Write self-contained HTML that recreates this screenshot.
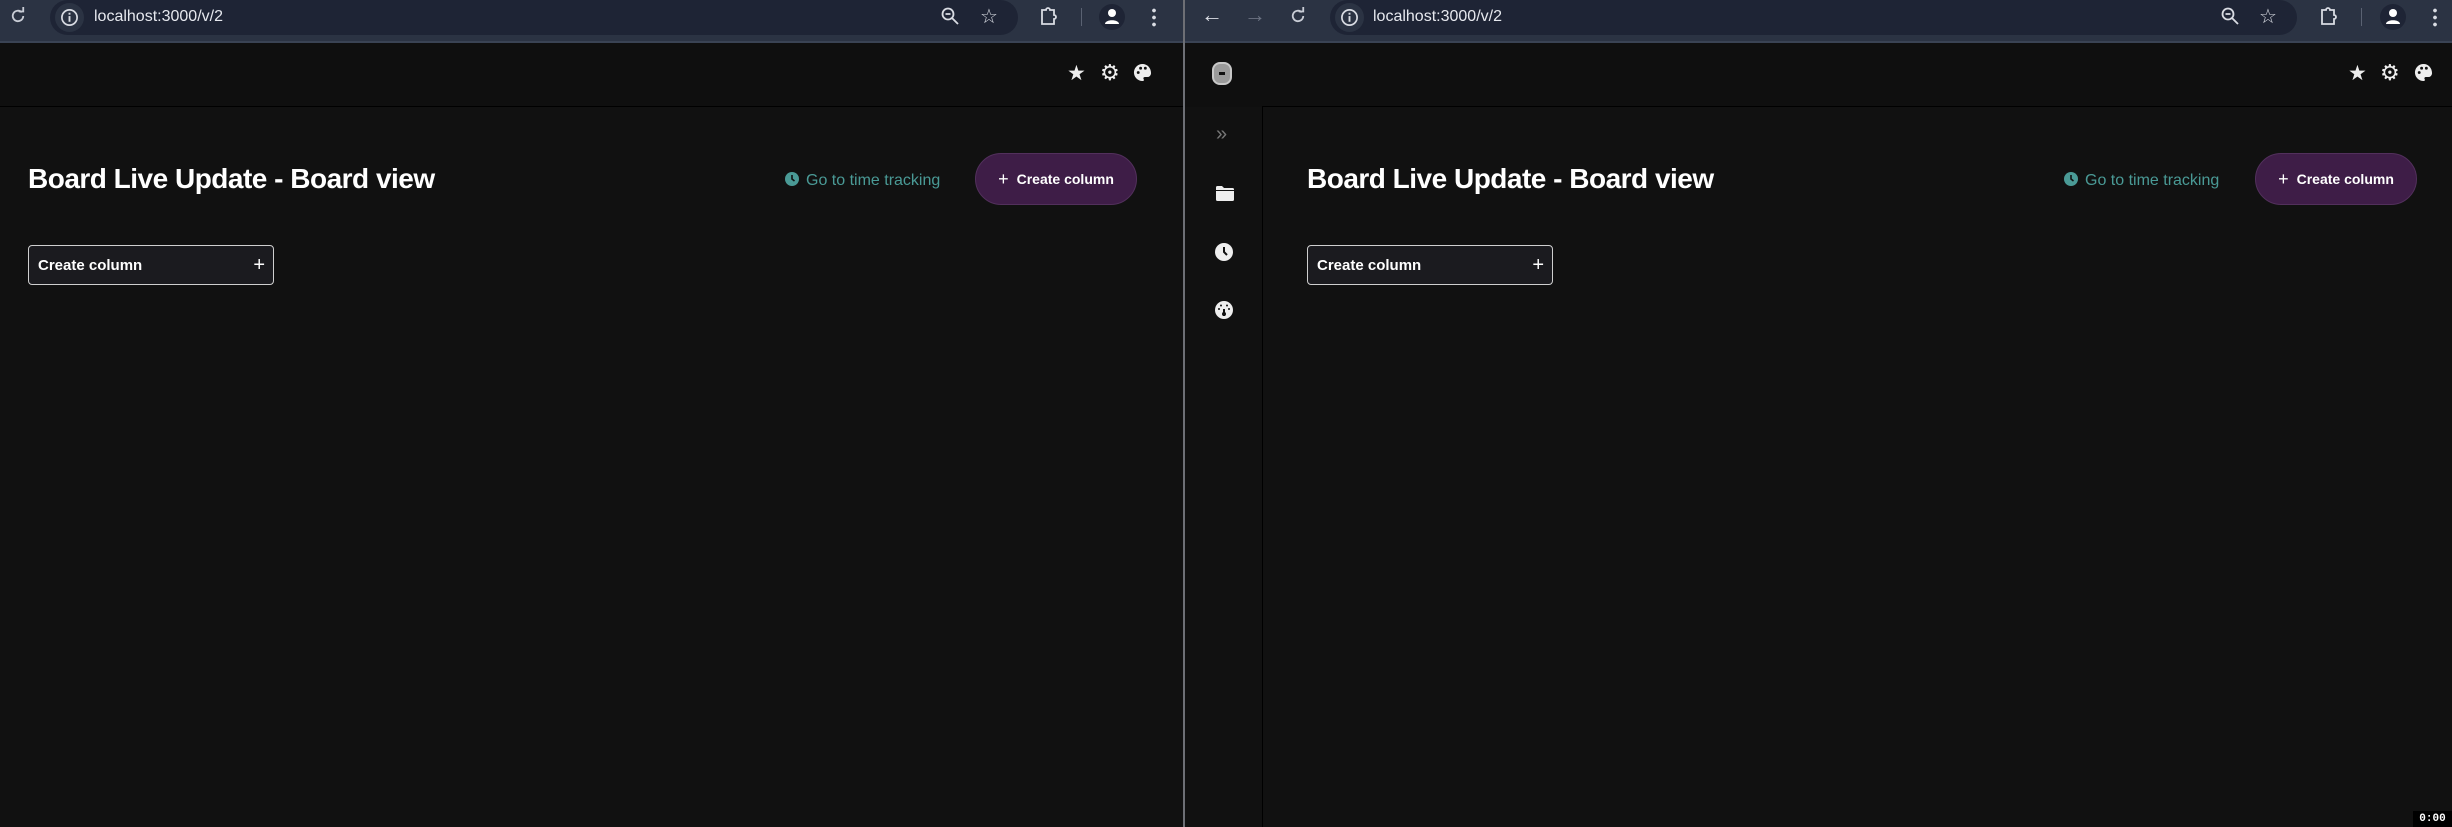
<!DOCTYPE html>
<html><head><meta charset="utf-8"><style>
*{margin:0;padding:0;box-sizing:border-box}
body{width:2452px;height:827px;background:#111;position:relative;overflow:hidden;font-family:"Liberation Sans",Arial,sans-serif;color:#fff}
.abs{position:absolute}
.bar{top:0;height:43px;background:#2b3343;border-bottom:2px solid #3a4354}
.pill{top:0;height:35px;background:#1e2435;border-radius:18px}
.url{font-size:16px;color:#e6e8ee;top:8px}
.hdr{top:43px;height:64px;background:#0f0f0f;border-bottom:1px solid #000}
.title{font-size:28px;font-weight:bold;top:163px;letter-spacing:-0.5px}
.tt{font-size:16px;color:#4a9a96;top:172px}
.cp{top:153px;width:162px;height:52px;border-radius:26px;background:#3e1d47;border:1px solid #52305c;font-size:14px;font-weight:bold;display:flex;align-items:center;justify-content:center;gap:8px}
.cb{top:245px;width:246px;height:40px;border:1px solid #cfcfcf;border-radius:4px;background:#1b1b1f;font-size:15px;font-weight:bold;display:flex;align-items:center;justify-content:space-between;padding:0 8px 0 9px}
svg{display:block}
</style></head><body>
<div class="abs bar" style="left:0;width:1183px"></div>
<svg class="abs" style="left:9px;top:7px" width="18" height="18" viewBox="0 0 24 24"><path d="M19 12a7 7 0 1 1-2-5" fill="none" stroke="#c9cdd6" stroke-width="2.4"/><path d="M13 6h6V0" fill="none" stroke="#c9cdd6" stroke-width="2.4"/></svg>
<div class="abs pill" style="left:50px;width:968px"></div>
<div class="abs" style="left:55px;top:3px;width:29px;height:29px;border-radius:50%;background:#2b3343"></div>
<svg class="abs" style="left:60px;top:8px" width="19" height="19" viewBox="0 0 20 20"><circle cx="10" cy="10" r="8" fill="none" stroke="#d9dce3" stroke-width="1.8"/><rect x="9" y="8.5" width="2" height="6" fill="#d9dce3"/><rect x="9" y="5" width="2" height="2" fill="#d9dce3"/></svg>
<div class="abs url" style="left:94px">localhost:3000/v/2</div>
<svg class="abs" style="left:940px;top:6px" width="20" height="20" viewBox="0 0 20 20"><circle cx="8" cy="8" r="5.5" fill="none" stroke="#d9dce3" stroke-width="1.8"/><path d="M12 12l6 6M5.5 8h5" stroke="#d9dce3" stroke-width="1.8"/></svg>
<div class="abs" style="left:980px;top:4px;font-size:20px;color:#d9dce3">☆</div>
<svg class="abs" style="left:1039px;top:5px" width="20" height="22" viewBox="0 0 20 22"><path d="M3 5h4a2 2 0 0 1 4 0h4v5a2 2 0 0 1 0 4v5H3z" fill="none" stroke="#d9dce3" stroke-width="1.8"/></svg>
<div class="abs" style="left:1081px;top:8px;width:1px;height:18px;background:#5a6272"></div>
<div class="abs" style="left:1099px;top:4px;width:26px;height:26px;border-radius:50%;background:#1e2435"></div>
<svg class="abs" style="left:1104px;top:8px" width="16" height="17" viewBox="0 0 16 17"><circle cx="8" cy="5" r="4" fill="#fff"/><path d="M1 16c0-5 14-5 14 0z" fill="#fff"/></svg>
<div class="abs" style="left:1152px;top:7px;width:4px;height:20px;background:radial-gradient(circle,#d9dce3 1.7px,transparent 2px) 0 0/4px 7px"></div>
<div class="abs" style="left:1183px;top:0;width:2px;height:827px;background:#6d6f75"></div>

<div class="abs bar" style="left:1185px;width:1267px"></div>
<div class="abs" style="left:1201px;top:2px;font-size:22px;color:#d9dce3">←</div>
<div class="abs" style="left:1244px;top:2px;font-size:22px;color:#6b7282">→</div>
<svg class="abs" style="left:1289px;top:7px" width="18" height="18" viewBox="0 0 24 24"><path d="M19 12a7 7 0 1 1-2-5" fill="none" stroke="#c9cdd6" stroke-width="2.4"/><path d="M13 6h6V0" fill="none" stroke="#c9cdd6" stroke-width="2.4"/></svg>
<div class="abs pill" style="left:1330px;width:967px"></div>
<div class="abs" style="left:1335px;top:3px;width:29px;height:29px;border-radius:50%;background:#2b3343"></div>
<svg class="abs" style="left:1340px;top:8px" width="19" height="19" viewBox="0 0 20 20"><circle cx="10" cy="10" r="8" fill="none" stroke="#d9dce3" stroke-width="1.8"/><rect x="9" y="8.5" width="2" height="6" fill="#d9dce3"/><rect x="9" y="5" width="2" height="2" fill="#d9dce3"/></svg>
<div class="abs url" style="left:1373px">localhost:3000/v/2</div>
<svg class="abs" style="left:2220px;top:6px" width="20" height="20" viewBox="0 0 20 20"><circle cx="8" cy="8" r="5.5" fill="none" stroke="#d9dce3" stroke-width="1.8"/><path d="M12 12l6 6M5.5 8h5" stroke="#d9dce3" stroke-width="1.8"/></svg>
<div class="abs" style="left:2259px;top:4px;font-size:20px;color:#d9dce3">☆</div>
<svg class="abs" style="left:2319px;top:5px" width="20" height="22" viewBox="0 0 20 22"><path d="M3 5h4a2 2 0 0 1 4 0h4v5a2 2 0 0 1 0 4v5H3z" fill="none" stroke="#d9dce3" stroke-width="1.8"/></svg>
<div class="abs" style="left:2361px;top:8px;width:1px;height:18px;background:#5a6272"></div>
<div class="abs" style="left:2380px;top:4px;width:26px;height:26px;border-radius:50%;background:#1e2435"></div>
<svg class="abs" style="left:2385px;top:8px" width="16" height="17" viewBox="0 0 16 17"><circle cx="8" cy="5" r="4" fill="#fff"/><path d="M1 16c0-5 14-5 14 0z" fill="#fff"/></svg>
<div class="abs" style="left:2433px;top:7px;width:4px;height:20px;background:radial-gradient(circle,#d9dce3 1.7px,transparent 2px) 0 0/4px 7px"></div>

<div class="abs hdr" style="left:0;width:1183px"></div>
<div class="abs" style="left:1067px;top:61px;font-size:21px;color:#eee">★</div>
<div class="abs" style="left:1100px;top:60px;font-size:22px;color:#eee">⚙</div>
<svg class="abs" style="left:1133px;top:63px" width="19" height="19" viewBox="0 0 20 20"><path d="M10 1a9 9 0 0 0 0 18c1.5 0 1.8-1 1.2-2-.7-1 0-2.2 1.3-2.2H15a4 4 0 0 0 4-4C19 5 15 1 10 1z" fill="#eee"/><circle cx="5.5" cy="10" r="1.5" fill="#111"/><circle cx="8" cy="5.5" r="1.5" fill="#111"/><circle cx="13" cy="5.5" r="1.5" fill="#111"/></svg>
<div class="abs title" style="left:28px">Board Live Update - Board view</div>
<svg class="abs" style="left:785px;top:172px" width="14" height="14" viewBox="0 0 14 14"><circle cx="7" cy="7" r="7" fill="#4a9a96"/><path d="M7 3v4l2.5 2" stroke="#111" stroke-width="1.6" fill="none"/></svg>
<div class="abs tt" style="left:806px">Go to time tracking</div>
<div class="abs cp" style="left:975px"><span style="font-size:18px;font-weight:normal">+</span>Create column</div>
<div class="abs cb" style="left:28px">Create column<span style="font-size:20px;font-weight:normal">+</span></div>

<div class="abs hdr" style="left:1185px;width:1267px;border:none"></div>
<div class="abs" style="left:1263px;top:106px;width:1189px;height:1px;background:#000"></div>
<div class="abs" style="left:1262px;top:106px;width:1px;height:721px;background:#000"></div>
<div class="abs" style="left:1212px;top:62px;width:20px;height:23px;border-radius:8px;background:#9a9a9a;border:2px solid #c8c8c8"></div>
<div class="abs" style="left:1219px;top:72px;width:6px;height:3px;background:#111"></div>
<div class="abs" style="left:1216px;top:123px;font-size:20px;color:#777">»</div>
<svg class="abs" style="left:1216px;top:186px" width="18" height="15" viewBox="0 0 18 15"><path d="M0 1.5A1.5 1.5 0 0 1 1.5 0H6l2 2h8.5A1.5 1.5 0 0 1 18 3.5v10a1.5 1.5 0 0 1-1.5 1.5h-15A1.5 1.5 0 0 1 0 13.5z" fill="#eee"/><rect x="0" y="4" width="18" height="1" fill="#111"/></svg>
<svg class="abs" style="left:1215px;top:243px" width="18" height="18" viewBox="0 0 18 18"><circle cx="9" cy="9" r="9" fill="#eee"/><path d="M9 4v5l3 3" stroke="#111" stroke-width="2" fill="none"/></svg>
<svg class="abs" style="left:1215px;top:301px" width="18" height="18" viewBox="0 0 18 18"><circle cx="9" cy="9" r="9" fill="#eee"/><path d="M9 8v7" stroke="#111" stroke-width="2"/><circle cx="9" cy="13" r="2" fill="#111"/><circle cx="4" cy="8" r="1" fill="#111"/><circle cx="14" cy="8" r="1" fill="#111"/><circle cx="6" cy="4.5" r="1" fill="#111"/><circle cx="12" cy="4.5" r="1" fill="#111"/></svg>
<div class="abs" style="left:2348px;top:61px;font-size:21px;color:#eee">★</div>
<div class="abs" style="left:2380px;top:60px;font-size:22px;color:#eee">⚙</div>
<svg class="abs" style="left:2414px;top:63px" width="19" height="19" viewBox="0 0 20 20"><path d="M10 1a9 9 0 0 0 0 18c1.5 0 1.8-1 1.2-2-.7-1 0-2.2 1.3-2.2H15a4 4 0 0 0 4-4C19 5 15 1 10 1z" fill="#eee"/><circle cx="5.5" cy="10" r="1.5" fill="#111"/><circle cx="8" cy="5.5" r="1.5" fill="#111"/><circle cx="13" cy="5.5" r="1.5" fill="#111"/></svg>
<div class="abs title" style="left:1307px">Board Live Update - Board view</div>
<svg class="abs" style="left:2064px;top:172px" width="14" height="14" viewBox="0 0 14 14"><circle cx="7" cy="7" r="7" fill="#4a9a96"/><path d="M7 3v4l2.5 2" stroke="#111" stroke-width="1.6" fill="none"/></svg>
<div class="abs tt" style="left:2085px">Go to time tracking</div>
<div class="abs cp" style="left:2255px"><span style="font-size:18px;font-weight:normal">+</span>Create column</div>
<div class="abs cb" style="left:1307px">Create column<span style="font-size:20px;font-weight:normal">+</span></div>
<div class="abs" style="left:2413px;top:811px;width:39px;height:16px;background:#000;font-family:'Liberation Mono',monospace;font-size:11px;font-weight:bold;color:#fff;text-align:center;line-height:16px">0:00</div>
</body></html>
